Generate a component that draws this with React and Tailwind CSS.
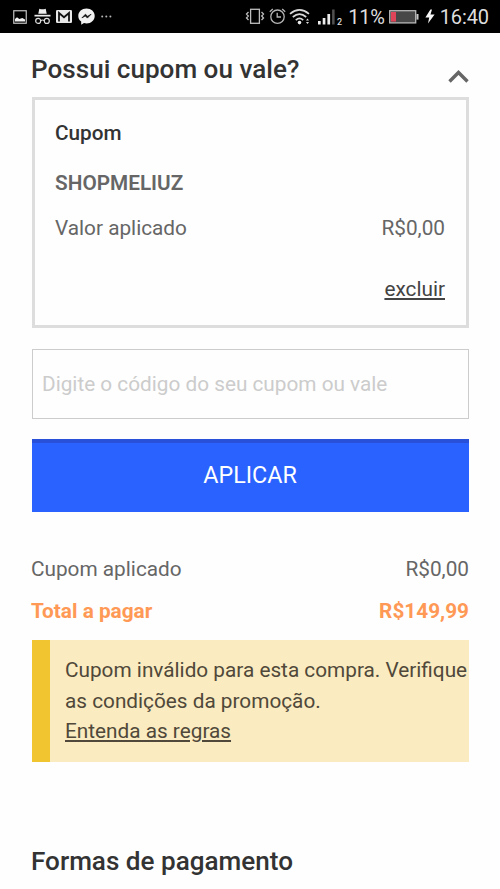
import React from "react";

function NotificationIcons() {
	return (
		<div className="flex items-center">
			<svg className="h-[14px] w-[14px]" viewBox="0 0 14 14">
				<rect x="0.75" y="0.75" width="12.5" height="12.5" fill="none" stroke="#c4c4c4" strokeWidth="1.2" />
				<path d="M2 11.5V9L4 7.2L6.3 9L9.3 8L12 9.4V11.5Z" fill="#f2f2f2" />
			</svg>
			<svg className="ml-[7px] h-[17px] w-[17px]" viewBox="0 0 17 17" fill="#ededed">
				<path d="M4.3 5.8L5.3 0.8Q8.5 1.8 11.7 0.8L12.7 5.8Z" />
				<rect x="0.5" y="6.8" width="16" height="1.7" />
				<g fill="none" stroke="#dedede" strokeWidth="1.2">
					<circle cx="4.2" cy="12.9" r="2.5" />
					<circle cx="12.8" cy="12.9" r="2.5" />
					<path d="M6.7 12.6Q8.5 11.4 10.3 12.6" />
				</g>
			</svg>
			<svg className="ml-[5px] h-[13px] w-[16px]" viewBox="0 0 16 13">
				<rect width="16" height="13" rx="1.3" fill="#e8e8e8" />
				<path d="M3 11.5V3L8 7.2L13 3V11.5" fill="none" stroke="#111" strokeWidth="1.8" />
			</svg>
			<svg className="ml-[6px] h-[17px] w-[17px]" viewBox="0 0 17 17">
				<path d="M8.5 0.5C3.9 0.5 0.3 3.7 0.3 7.9C0.3 10.3 1.4 12.3 3.2 13.6V16.7L6 15.1C6.8 15.3 7.6 15.4 8.5 15.4C13.1 15.4 16.7 12.1 16.7 7.9C16.7 3.7 13.1 0.5 8.5 0.5Z" fill="#f2f2f2" />
				<path d="M3.9 9.9L7.4 6.2L9.6 8.3L13.1 6.2L9.4 10.1L7.3 8Z" fill="#111" stroke="#111" strokeWidth="0.7" />
			</svg>
			<svg className="ml-[6px] h-[3px] w-[11px]" viewBox="0 0 11 3" fill="#b5b5b5">
				<circle cx="1.2" cy="1.5" r="1" />
				<circle cx="5.3" cy="1.5" r="1" />
				<circle cx="9.4" cy="1.5" r="1" />
			</svg>
		</div>
	);
}

function SystemIcons() {
	return (
		<div className="flex items-center text-[20px] leading-none text-[#dedede]">
			<svg className="h-[17px] w-[20px]" viewBox="0 0 20 17" fill="none" stroke="#bdbdbd" strokeWidth="1.3">
				<rect x="5.6" y="1.3" width="8.8" height="14" />
				<path d="M3.5 4L1.5 6L3.3 8L1.5 10L3.5 12M16.5 4L18.5 6L16.7 8L18.5 10L16.5 12" />
			</svg>
			<svg className="ml-[4px] h-[17px] w-[17px]" viewBox="0 0 17 17" fill="none" stroke="#b5b5b5" strokeWidth="1.3">
				<circle cx="8.5" cy="8.7" r="6.7" />
				<path d="M8.2 4.8V9H12M0.8 3.8L3.8 1M16.2 3.8L13.2 1" />
			</svg>
			<svg className="ml-[3px] h-[17px] w-[21px]" viewBox="0 0 21 17">
				<g fill="none" stroke="#d8d8d8" strokeWidth="1.7">
					<path d="M1 5.8Q10.5 -2 20 5.8" />
					<path d="M3.8 9Q10.5 3.3 17.2 9" />
					<path d="M6.8 12.1Q10.5 8.8 14.2 12.1" />
				</g>
				<circle cx="10.5" cy="14.6" r="1.8" fill="#ededed" />
				<path d="M17 12.6H20L18.5 10.5ZM17 14H20L18.5 16.1Z" fill="#ddd" />
			</svg>
			<svg className="ml-[8px] h-[16px] w-[17px]" viewBox="0 0 17 16" fill="#ededed">
				<rect x="0" y="12" width="2.7" height="3.5" />
				<rect x="4.7" y="9" width="2.7" height="6.5" />
				<rect x="9.4" y="5" width="2.7" height="10.5" />
				<rect x="14.1" y="0.5" width="2.5" height="15" fill="#505050" />
			</svg>
			<span className="ml-[2px] mt-[11px] text-[9px] font-medium">2</span>
			<span className="ml-[6px] mt-px tracking-[-0.2px]">11%</span>
			<svg className="ml-[4px] h-[14px] w-[30px]" viewBox="0 0 30 14">
				<rect x="0.7" y="0.7" width="26" height="12.2" fill="#484848" stroke="#b8b8b8" strokeWidth="1.3" />
				<rect x="2" y="2" width="5" height="9.6" fill="#df4458" />
				<rect x="27.5" y="4" width="2" height="5.6" fill="#c8c8c8" />
			</svg>
			<svg className="ml-[6px] h-[15px] w-[10px]" viewBox="0 0 10 15" fill="#f5f5f5">
				<path d="M5.4 0.5L0.4 8.6H4.2L3 14.5L9.6 5.6H5.5L7 0.5Z" />
			</svg>
			<span className="ml-[5px] mt-px tracking-[-0.1px]">16:40</span>
		</div>
	);
}

function StatusBar() {
	return (
		<header className="flex h-[33px] items-center justify-between bg-black pl-[13px] pr-[11px]">
			<NotificationIcons />
			<SystemIcons />
		</header>
	);
}

function AppliedCoupon() {
	return (
		<section className="h-[231px] border-[3px] border-[#dddddd] px-[20px] pt-[17px] text-[#666666]">
			<h2 className="font-medium leading-[32px] text-[#333333]">Cupom</h2>
			<p className="mt-[18px] font-semibold leading-[32px]">SHOPMELIUZ</p>
			<div className="mt-[13px] flex justify-between pr-px leading-[32px]">
				<span>Valor aplicado</span>
				<span>R$0,00</span>
			</div>
			<div className="mt-[29px] pr-px text-right leading-[32px]">
				<a href="#" className="text-[#444444] underline">excluir</a>
			</div>
		</section>
	);
}

export default function App() {
	return (
		<div className="h-[889px] w-[500px] overflow-hidden bg-[#fefefe] font-['Roboto',sans-serif] text-[20.77px]">
			<StatusBar />

			<main className="pl-[32px] pr-[31px]">
				<div className="flex h-[64px] items-start justify-between pt-[20px]">
					<h1 className="-ml-px text-[26.1px] font-medium leading-[32px] text-[#333333]">Possui cupom ou vale?</h1>
					<svg className="mt-[16px] h-[14px] w-[21px]" viewBox="0 0 21 14" fill="none" stroke="#666666" strokeWidth="3.4">
						<path d="M1.5 12.5L10.5 3.5L19.5 12.5" />
					</svg>
				</div>

				<AppliedCoupon />

				<input
					type="text"
					placeholder="Digite o código do seu cupom ou vale"
					className="mt-[21px] block h-[70px] w-full border-[1.5px] border-[#cccccc] px-[9px] placeholder:text-[#cccccc]"
				/>
				<button className="mt-[20px] block h-[73px] w-full border-t-[4px] border-[#2850d8] bg-[#2962ff] pb-[5px] pr-px text-[23.3px] text-white">
					APLICAR
				</button>

				{/* Totals */}
				<div className="mt-[41px] flex justify-between leading-[32px] text-[#666666]">
					<span className="-ml-px">Cupom aplicado</span>
					<span>R$0,00</span>
				</div>
				<div className="mt-[10px] flex justify-between font-bold leading-[32px] text-[#ff9955]">
					<span className="-ml-px">Total a pagar</span>
					<span>R$149,99</span>
				</div>

				<div className="mt-[13px] h-[122px] whitespace-nowrap border-l-[18px] border-[#f0c530] bg-[#faecc0] pl-[15px] pt-[15px] leading-[30.5px] text-[#50483a]">
					<p>Cupom inválido para esta compra. Verifique</p>
					<p>as condições da promoção.</p>
					<a href="#" className="underline">Entenda as regras</a>
				</div>

				<h1 className="-ml-px mt-[83px] text-[26.1px] font-medium leading-[32px] text-[#333333]">Formas de pagamento</h1>
			</main>
		</div>
	);
}
